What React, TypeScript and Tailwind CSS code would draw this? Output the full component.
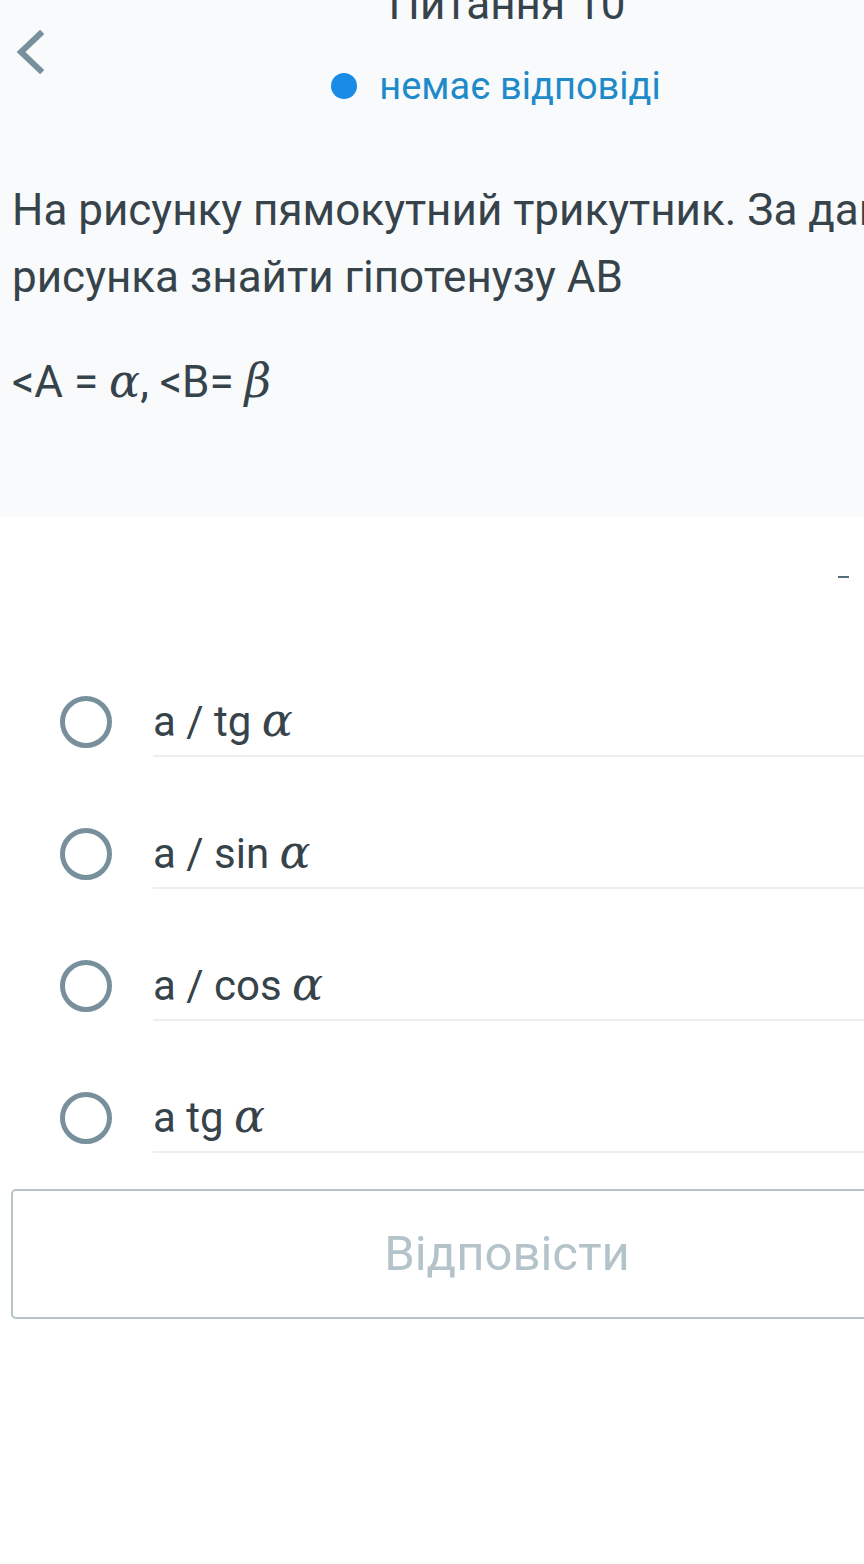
import { ReactNode } from 'react'

function Greek({ children }: { children: ReactNode }) {
  return <span className="font-['DejaVu_Serif',serif] italic text-[46px]">{children}</span>
}

const options: ReactNode[] = [
  <>a / tg <Greek>α</Greek></>,
  <>a / sin <Greek>α</Greek></>,
  <>a / cos <Greek>α</Greek></>,
  <>a tg <Greek>α</Greek></>,
]

function Radio() {
  return <span className="block w-[52px] h-[52px] rounded-full border-[5px] border-[#78909c] flex-shrink-0" />
}

export default function App() {
  return (
    <div className="w-full h-[1564px] overflow-hidden bg-white">
      <div className="w-[1014px] font-['Roboto',sans-serif] text-[#37434a]">
        {/* Header */}
        <div className="h-[517px] bg-[#f8fafc]">
          <div className="grid grid-cols-[1fr_auto_1fr]">
            <div className="pl-[14px] pt-[29px]">
              <svg width="34" height="46" viewBox="0 0 34 46" fill="none">
                <path d="M26 5 L7 23 L26 41" stroke="#78909c" strokeWidth="6" strokeLinecap="square" />
              </svg>
            </div>
            <div className="flex flex-col items-center">
              <div className="-mt-[22px] text-[44px] leading-[52px] text-[#37434a]">Питання 10</div>
              <div className="mt-[34px] pr-[22px] flex items-center gap-[22px] h-[44px]">
                <span className="w-[26px] h-[26px] rounded-full bg-[#1a8ce6]" />
                <span className="text-[38px] leading-[44px] text-[#1f8ac9]">немає відповіді</span>
              </div>
            </div>
            <div />
          </div>

          <div className="px-[12px] mt-[69px] text-[44px] leading-[67px] whitespace-nowrap">
            <p>На рисунку пямокутний трикутник. За даними</p>
            <p>рисунка знайти гіпотенузу АВ</p>
            <p className="mt-[37px]">
              &lt;A = <Greek>α</Greek>, &lt;B= <Greek>β</Greek>
            </p>
          </div>
        </div>

        {/* Image placeholder */}
        <div className="pl-[838px] pt-[59px]">
          <div className="w-[11px] h-[2px] bg-[#546e7a]" />
        </div>

        {/* Options */}
        <div className="pt-[47px]">
          {options.map((opt, i) => (
            <div key={i} className="flex items-center pt-[61px]">
              <div className="w-[153px] flex justify-start pl-[60px]">
                <Radio />
              </div>
              <div className="flex-1 h-[71px] flex items-center border-b-2 border-[#eceff1] text-[42px] text-[#37434a]">
                <span>{opt}</span>
              </div>
            </div>
          ))}
        </div>

        {/* Submit */}
        <div className="px-[11px] mt-[36px]">
          <button className="w-full h-[130px] rounded-[5px] border-2 border-[#b7c3c9] text-[49px] text-[#b4c2ca] bg-white">
            Відповісти
          </button>
        </div>
      </div>
    </div>
  )
}
